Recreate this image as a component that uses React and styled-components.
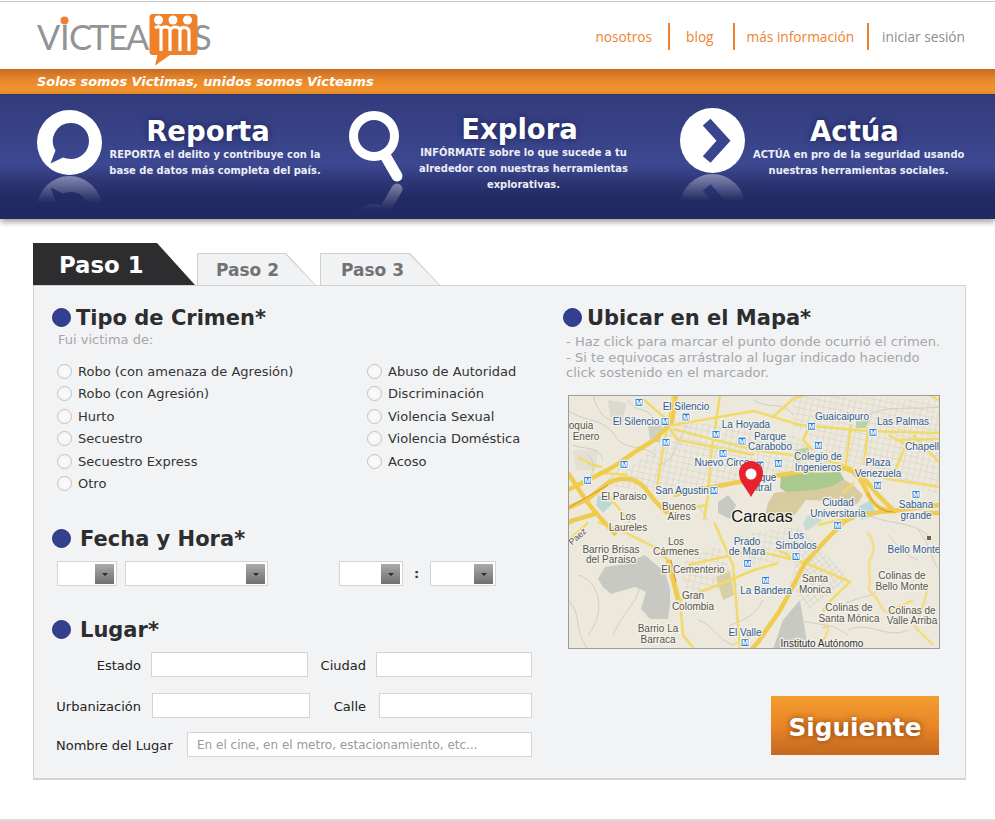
import React from "react";
import styled, { createGlobalStyle } from "styled-components";

const Global = createGlobalStyle`
  html, body { margin: 0; padding: 0; background: #fff; }
  body { font-family: "DejaVu Sans", Verdana, sans-serif; overflow: hidden; }
  * { box-sizing: border-box; }
`;

const Page = styled.div`
  width: 995px;
  height: 821px;
  padding-top: 1px;
  display: flex;
  flex-direction: column;
`;
const TopRule = styled.div`
  height: 1px;
  background: #c8c8c8;
`;
const Header = styled.header`
  height: 67px;
  padding: 3px 30px 0 30px;
  display: flex;
  justify-content: space-between;
  align-items: flex-start;
`;
const LogoSvg = styled.svg`
  display: block;
  width: 190px;
  height: 65px;
`;
const LogoText = styled.text`
  font-family: "Lato", "Open Sans", sans-serif;
  font-size: 34.5px;
  fill: #929496;
`;
const Nav = styled.nav`
  display: flex;
  align-items: center;
  height: 27px;
  margin-top: 18px;
`;
const NavLink = styled.a`
  font-family: "Open Sans", sans-serif;
  font-size: 13.7px;
  color: ${(p) => (p.$muted ? "#8e8e8e" : "#ee8230")};
`;
const NavSep = styled.span`
  width: 2px;
  height: 27px;
  background: #ee7f2d;
  margin: 0 ${(p) => p.$r}px 0 ${(p) => p.$l}px;
`;
const Tagline = styled.div`
  height: 25px;
  padding: 0 0 1px 37px;
  display: flex;
  align-items: center;
  font-size: 12.9px;
  font-weight: 700;
  font-style: italic;
  color: #fff;
  background: linear-gradient(#c46a22 0%, #e3832b 35%, #f0912c 70%, #f0932d 100%);
`;
const Band = styled.section`
  height: 125px;
  padding-left: 37px;
  display: grid;
  grid-template-columns: 312px 331px 1fr;
  background: linear-gradient(#333b7b 0%, #3a458c 45%, #3d4891 56%, #2f3878 68%, #222b64 82%, #1f285f 100%);
  box-shadow: 0 3px 6px rgba(0, 0, 0, 0.38);
  border-top: 1px solid #2f3670;
`;
const Feature = styled.article`
  display: flex;
  align-items: flex-start;
`;
const IconSvg = styled.svg`
  display: block;
  flex: none;
  overflow: visible;
  margin-top: ${(p) => p.$mt}px;
`;
const FeatureText = styled.div`
  width: ${(p) => p.$w}px;
  margin-left: ${(p) => p.$ml}px;
  margin-top: ${(p) => p.$mt}px;
  text-align: center;
  color: #fff;
`;
const FeatureTitle = styled.h2`
  margin: 0;
  padding-right: ${(p) => p.$shift}px;
  font-size: 27.5px;
  line-height: 31px;
  font-weight: 700;
  text-shadow: 0 0 6px rgba(10, 14, 60, 0.6);
`;
const FeatureDesc = styled.p`
  margin: 0;
  font-size: 9.95px;
  line-height: 16px;
  font-weight: 700;
  color: #eceef6;
  white-space: pre;
`;

const TabsRow = styled.div`
  margin: 24px 0 0 33px;
  height: 42px;
  display: flex;
  align-items: flex-end;
`;
const ActiveTab = styled.div`
  width: 162px;
  height: 42px;
  padding: 9px 0 0 26px;
  background: #2d2d2f;
  clip-path: polygon(0 0, 124px 0, 100% 100%, 0 100%);
  font-size: 22.8px;
  line-height: 26px;
  font-weight: 700;
  color: #fff;
`;
const TabShell = styled.div`
  width: ${(p) => p.$w}px;
  height: 32px;
  margin-left: ${(p) => p.$ml}px;
  padding: 1px 1px 0 1px;
  background: #cfcfcf;
  clip-path: polygon(0 0, calc(100% - 30px) 0, 100% 100%, 0 100%);
`;
const TabFace = styled.div`
  height: 31px;
  padding: 5px 0 0 ${(p) => p.$pl}px;
  background: #f1f2f4;
  clip-path: polygon(0 0, calc(100% - 30px) 0, 100% 100%, 0 100%);
  font-size: 17px;
  line-height: 22px;
  font-weight: 700;
  color: #727274;
`;
const Panel = styled.main`
  margin-left: 33px;
  width: 933px;
  height: 495px;
  padding-top: 18px;
  background: #f2f3f5;
  border: 1px solid #d2d2d2;
  border-bottom-width: 2px;
  display: grid;
  grid-template-columns: 529px 1fr;
`;
const LeftCol = styled.div`
  padding-left: 18px;
`;
const RightCol = styled.div``;
const SectionHead = styled.div`
  display: flex;
  align-items: center;
  height: 26px;
  gap: ${(p) => p.$gap}px;
  margin-top: ${(p) => p.$mt || 0}px;
`;
const Bullet = styled.span`
  width: 19px;
  height: 19px;
  flex: none;
  border-radius: 50%;
  background: #33408f;
  border: 1px solid #273272;
`;
const SectionTitle = styled.h3`
  margin: 2px 0 0;
  font-size: 21px;
  line-height: 26px;
  font-weight: 700;
  color: #2d2d2f;
`;
const Hint = styled.div`
  margin: 1px 0 0 6px;
  font-size: 13px;
  line-height: 17px;
  color: #a6a6a6;
`;
const RadioGrid = styled.div`
  margin: 12px 0 0 5px;
  display: grid;
  grid-template-rows: repeat(6, 22.5px);
  grid-auto-flow: column;
  grid-template-columns: 310px 1fr;
`;
const RadioRow = styled.label`
  display: flex;
  align-items: center;
  font-size: 13px;
  color: #333;
`;
const Radio = styled.input.attrs({ type: "radio" })`
  appearance: none;
  width: 15px;
  height: 15px;
  margin: 0 6px 0 0;
  flex: none;
  border-radius: 50%;
  border: 1px solid #c2c2c2;
  background: radial-gradient(#fbfbfb, #f3f3f3);
`;
const DateRow = styled.div`
  margin: 10px 0 0 5px;
  display: flex;
  align-items: center;
`;
const FakeSelect = styled.div`
  width: ${(p) => p.$w}px;
  height: 25px;
  margin-right: ${(p) => p.$mr || 0}px;
  padding: 2px 2px 2px 0;
  background: #fff;
  border: 1px solid #d4d4d4;
  display: flex;
  justify-content: flex-end;
`;
const SelectBtn = styled.span`
  width: 19px;
  height: 20px;
  background: linear-gradient(#aaaaaa, #6f6f6f);
  display: flex;
  align-items: center;
  justify-content: center;
  &::after {
    content: "";
    border-left: 3.5px solid transparent;
    border-right: 3.5px solid transparent;
    border-top: 3.5px solid #2c2c2c;
  }
`;
const Colon = styled.span`
  width: 27px;
  text-align: center;
  font-size: 13px;
  font-weight: 700;
  color: #333;
`;
const FieldRow = styled.div`
  display: flex;
  align-items: center;
  margin: ${(p) => p.$mt}px 0 0 4px;
`;
const FieldLabel = styled.label`
  width: ${(p) => p.$w}px;
  margin-right: ${(p) => p.$mr}px;
  padding-top: 2px;
  text-align: ${(p) => (p.$left ? "left" : "right")};
  font-size: 13px;
  color: #222;
  white-space: nowrap;
`;
const TextInput = styled.input`
  width: ${(p) => p.$w}px;
  height: 25px;
  padding: 0 9px;
  border: 1px solid #d4d4d4;
  border-radius: 0;
  background: #fff;
  outline: none;
  font-family: "DejaVu Sans", sans-serif;
  font-size: 12px;
  &::placeholder {
    color: #9a9a9a;
    opacity: 1;
  }
`;
const MapHelp = styled.p`
  margin: 4px 0 0 3px;
  font-size: 13.1px;
  line-height: 15.5px;
  color: #a6a6a6;
  white-space: pre;
`;
const MapFrame = styled.svg`
  display: block;
  margin: 14px 0 0 5px;
  width: 372px;
  height: 254px;
  border: 1px solid #9c9c9c;
  background: #ece8dc;
`;
const MapLabel = styled.text`
  font-family: "Liberation Sans", Arial, sans-serif;
  font-size: ${(p) => p.$size || 10}px;
  text-anchor: middle;
  dominant-baseline: middle;
  fill: ${(p) => p.$fill};
  stroke: #f6f3ec;
  stroke-width: 2.5px;
  stroke-opacity: 0.9;
  paint-order: stroke;
`;
const MetroBox = styled.rect`
  fill: #3580d4;
  stroke: #fff;
  stroke-width: 1px;
`;
const MetroM = styled.text`
  font-family: "Liberation Sans", Arial, sans-serif;
  font-size: 7.5px;
  font-weight: 700;
  text-anchor: middle;
  fill: #fff;
`;
const NextButton = styled.button`
  display: block;
  margin: 47px 0 0 208px;
  width: 168px;
  height: 59px;
  border: 0;
  padding: 4px 0 0;
  background: linear-gradient(#f29d2e 0%, #ea8528 50%, #c4691f 100%);
  font-family: "DejaVu Sans", sans-serif;
  font-size: 24.7px;
  font-weight: 700;
  color: #fff;
  text-shadow: 0 0 6px rgba(90, 40, 0, 0.7);
`;
const FooterRule = styled.div`
  margin-top: auto;
  height: 2px;
  background: #dcdcdc;
`;

const Reflect = ({ id, height, children }) => (
  <>
    <defs>
      <linearGradient id={id} x1="0" y1="0" x2="0" y2="1">
        <stop offset="0" stopColor="#fff" stopOpacity="0.42" />
        <stop offset="1" stopColor="#fff" stopOpacity="0" />
      </linearGradient>
      <mask id={id + "m"} maskUnits="userSpaceOnUse" x="-5" y={height} width="80" height="28">
        <rect x="-5" y={height} width="80" height="28" fill={`url(#${id})`} />
      </mask>
    </defs>
    <g mask={`url(#${id}m)`}>
      <g transform={`translate(0 ${height * 2 + 1}) scale(1 -1)`}>{children}</g>
    </g>
    {children}
  </>
);

const SPEECH =
  "M32.5 0a32.5 32.5 0 1 0 0 65a32.5 32.5 0 1 0 0-65ZM34 13a18 18 0 0 1 0 36c-3 0-6-1-8-1.500L13.500 53.500L18.500 40.500a18 18 0 0 1 15.500-27.500Z";

const SpeechIcon = () => (
  <IconSvg $mt={15} width="65" height="92" viewBox="0 0 65 92">
    <Reflect id="rf1" height={65}>
      <path d={SPEECH} fill="#fff" fillRule="evenodd" />
    </Reflect>
  </IconSvg>
);
const LensIcon = () => (
  <IconSvg $mt={16} width="54" height="96" viewBox="0 0 54 96">
    <Reflect id="rf2" height={71}>
      <circle cx="25" cy="25" r="20.500" fill="none" stroke="#fff" strokeWidth="9" />
      <path d="M37 46L48 65" stroke="#fff" strokeWidth="11" strokeLinecap="round" />
    </Reflect>
  </IconSvg>
);
const ArrowIcon = () => (
  <IconSvg $mt={13} width="65" height="92" viewBox="0 0 65 92">
    <Reflect id="rf3" height={65}>
      <circle cx="32.500" cy="32.500" r="32.500" fill="#fff" />
      <path d="M22.800 17.500L30.500 10.800L50.500 32.800L30.500 54.800L22.800 48.200L36.500 32.800Z" fill="#3a4590" />
    </Reflect>
  </IconSvg>
);

const Logo = () => (
  <LogoSvg viewBox="30 5 190 65">
    <LogoText x="37 60 69 89 108 126" y="50">VICTEA</LogoText>
    <LogoText x="193" y="50">S</LogoText>
    <circle cx="64.500" cy="20.500" r="4" fill="#ee8230" />
    <path
      d="M153 14H194a3.500 3.500 0 0 1 3.500 3.500V51.500a3.500 3.500 0 0 1-3.500 3.500H170L155 65.500L157.500 55H153a3.500 3.500 0 0 1-3.500-3.500V17.500A3.500 3.500 0 0 1 153 14Z"
      fill="#ee8129"
    />
    <circle cx="158.500" cy="20" r="4.500" fill="#fff" />
    <circle cx="173" cy="20" r="4.500" fill="#fff" />
    <circle cx="187.500" cy="20" r="4.500" fill="#fff" />
    <path
      d="M155 28c3-2 5-2 6 1V51M161 29c2-3 8-3 9 1V51M170 30c2-4 9-4 10 0V51M180 30c2-4 8-3 9 1V51"
      fill="none"
      stroke="#fff"
      strokeWidth="3.200"
    />
  </LogoSvg>
);

const LEFT_RADIOS = [
  "Robo (con amenaza de Agresión)",
  "Robo (con Agresión)",
  "Hurto",
  "Secuestro",
  "Secuestro Express",
  "Otro",
];
const RIGHT_RADIOS = ["Abuso de Autoridad", "Discriminación", "Violencia Sexual", "Violencia Doméstica", "Acoso"];

const BLUE = "#2f5c94";
const GRAY = "#565650";
const LABELS = [
  ["El Silencio", 118, 12, BLUE],
  ["El Silencio", 68, 27, BLUE],
  ["oquia", 13, 31, GRAY],
  ["Enero", 18, 42, GRAY],
  ["La Hoyada", 178, 30, BLUE],
  ["Parque", 202, 42, BLUE],
  ["Carabobo", 202, 52, BLUE],
  ["Guaicaipuro", 274, 22, BLUE],
  ["Las Palmas", 335, 27, BLUE],
  ["Chapell", 354, 52, BLUE],
  ["Colegio de", 250, 62, BLUE],
  ["Ingenieros", 250, 73, BLUE],
  ["Plaza", 310, 68, BLUE],
  ["Venezuela", 310, 79, BLUE],
  ["Nuevo Circo", 154, 68, BLUE],
  ["San Agustin", 114, 96, BLUE],
  ["que", 200, 83, BLUE],
  ["ntral", 194, 93, BLUE],
  ["El Paraiso", 56, 102, GRAY],
  ["Buenos", 111, 112, GRAY],
  ["Aires", 111, 122, GRAY],
  ["Los", 60, 122, GRAY],
  ["Laureles", 60, 133, GRAY],
  ["Ciudad", 270, 108, BLUE],
  ["Universitaria", 270, 119, BLUE],
  ["Sabana", 348, 110, BLUE],
  ["grande", 348, 121, BLUE],
  ["Los", 228, 141, BLUE],
  ["Símbolos", 228, 151, BLUE],
  ["Prado", 179, 147, BLUE],
  ["de Mara", 179, 157, BLUE],
  ["Los", 108, 147, GRAY],
  ["Cármenes", 108, 157, GRAY],
  ["Barrio Brisas", 43, 155, GRAY],
  ["del Paraiso", 43, 165, GRAY],
  ["El Cementerio", 125, 175, GRAY],
  ["Bello Monte", 346, 155, BLUE],
  ["Santa", 247, 184, GRAY],
  ["Monica", 247, 195, GRAY],
  ["La Bandera", 198, 196, BLUE],
  ["Colinas de", 334, 181, GRAY],
  ["Bello Monte", 334, 192, GRAY],
  ["Gran", 125, 201, GRAY],
  ["Colombia", 125, 212, GRAY],
  ["Colinas de", 281, 213, GRAY],
  ["Santa Mónica", 281, 224, GRAY],
  ["Colinas de", 344, 216, GRAY],
  ["Valle Arriba", 344, 226, GRAY],
  ["Barrio La", 90, 234, GRAY],
  ["Barraca", 90, 245, GRAY],
  ["El Valle", 177, 238, BLUE],
  ["Instituto Autónomo", 254, 249, "#333"],
];
const METROS = [
  [252, 322], [330, 380], [393, 366], [483, 418], [561, 438], [333, 442], [504, 475], [207, 508],
  [98, 556], [477, 587], [670, 505], [615, 510], [770, 394], [790, 451], [954, 412], [968, 571],
  [1083, 598], [848, 691], [723, 785], [578, 805], [632, 856], [570, 1043],
].map(([x, y]) => [x / 3 - 13, y / 3 - 100]);

const MAJOR = [
  "M0 113L20 104L40 88C55 80 68 84 76 92L88 107L98 117L118 112",
  "M105 100L140 93L186 84L232 77L272 73C285 73 292 82 298 95C303 108 312 116 325 116L372 110",
  "M0 95L22 84L45 72L70 55L88 44L104 26L108 0",
  "M0 78C8 90 16 104 28 118L48 140",
  "M100 165L105 185L110 205",
  "M276 127L258 145L237 168L222 197L211 217L190 247L184 254",
  "M276 127C290 118 305 118 322 116",
  "M0 127L30 118",
  "M290 76L310 100L328 118",
  "M355 118H372",
];
const ROADS = [
  "M75 4L105 30L186 16L232 30L300 36L372 38",
  "M105 34L186 55L258 65L320 84L372 92",
  "M105 0L96 50L88 96",
  "M152 0L143 60L140 100L136 125",
  "M30 127L52 135L86 152L100 165L108 190L112 205L115 240L126 254",
  "M112 205L150 190L186 175L210 168",
  "M120 170L186 155L235 167",
  "M146 127L165 170L168 205L172 254",
  "M238 168L282 187L262 206L255 216",
  "M205 22L225 4L236 0",
  "M283 30L277 75",
  "M300 35L296 70",
  "M320 40L330 45L338 50L325 80",
  "M345 40L372 68",
  "M372 6L362 0",
  "M284 122L250 130",
  "M0 145L10 138L20 127",
  "M240 35L235 45L245 55",
  "M186 75L192 88",
  "M210 155L225 163L235 168",
  "M105 115L140 110",
  "M40 100L60 125L62 127",
  "M100 32L110 45L186 60",
  "M0 130L8 124",
  "M60 80L35 78",
  "M10 62L25 70L34 72",
  "M330 45L372 44",
  "M286 88L275 98",
  "M0 145L18 130",
];
const SQUIGGLE = [
  "M299 137C306 146 308 154 303 162C298 172 304 178 301 195C312 205 312 212 317 217",
  "M360 190C358 205 352 220 347 232L365 250",
  "M255 233C265 228 258 240 254 248",
  "M318 218L345 205",
  "M165 250L185 240",
];
const MINOR = [
  "M0 15C20 30 35 20 50 45C60 55 75 50 88 60", "M25 0C30 20 40 30 60 25", "M120 30C105 50 110 65 90 70",
  "M20 60C30 70 25 80 15 90", "M60 60C50 70 55 75 40 85", "M130 110L140 125", "M70 175C80 200 55 215 45 240",
  "M10 180C30 185 40 215 20 240", "M130 225C145 230 150 245 165 250", "M280 235C300 225 320 245 340 235",
  "M350 135C360 145 365 170 372 175", "M225 222C245 232 260 225 280 240", "M300 20C320 10 340 15 372 12",
  "M186 5C200 15 215 5 225 20", "M300 120C320 130 340 125 360 140", "M0 205C15 220 5 235 20 254",
  "M195 205C185 225 170 225 160 232", "M5 50C15 55 30 50 35 65", "M60 5C70 20 80 10 85 25",
  "M270 215C285 200 300 205 310 195", "M320 140C330 150 335 160 350 165",
];

const CaracasMap = () => (
  <MapFrame viewBox="1 1 370 252" preserveAspectRatio="none">
    <defs>
      <pattern id="gridp" width="6" height="6" patternUnits="userSpaceOnUse" patternTransform="rotate(12)">
        <path d="M0 0H6M0 0V6" stroke="#d4cfc2" strokeWidth="1" fill="none" />
      </pattern>
      <pattern id="gridq" width="5" height="5" patternUnits="userSpaceOnUse" patternTransform="rotate(-38)">
        <path d="M0 0H5M0 0V5" stroke="#d0cbbe" strokeWidth="1" fill="none" />
      </pattern>
    </defs>
    <rect width="372" height="254" fill="#ece8dc" />
    <path d="M105 25L225 40L275 75L190 85L105 100L40 90L90 50Z" fill="url(#gridp)" />
    <path d="M225 0L372 5V100L330 85L275 72L225 30Z" fill="url(#gridp)" />
    <path d="M235 135L282 185L240 215L222 190Z" fill="url(#gridq)" />
    <path d="M110 170L150 150L170 190L120 200Z" fill="url(#gridp)" />
    <path d="M170 140L235 130L225 165L175 170Z" fill="url(#gridp)" />
    <path d="M40 5L58 8L55 25L42 22Z" fill="#dcdad0" />
    <path d="M5 55L30 55L28 75L8 75Z" fill="#e2dfd4" />
    <path d="M80 30L95 25L92 48L82 45Z" fill="#cfcfc8" />
    <path
      d="M30 184L37 172L57 169L77 160L85 167L97 177L102 194L102 210L100 224L82 224L73 214L78 197L67 192L43 199L35 192Z"
      fill="#c9c9c3"
    />
    <path d="M148 182L162 176L166 200L155 205Z" fill="#d8cfa8" />
    <path d="M150 107L160 100L168 110L162 124L150 118Z" fill="#c9c9c3" />
    <path d="M30 100L45 108L35 118L28 110Z" fill="#bcd8d4" />
    <path d="M215 225L232 205L240 254H205Z" fill="#c9c9c3" />
    <path d="M240 120L255 125L238 136L235 128Z" fill="#c9dcd4" />
    <path d="M290 112L303 105L308 120L293 125Z" fill="#bcd8dc" />
    <path
      d="M206 98L246 93L272 82L285 90L295 100L290 108L283 112L263 106L238 105L225 122L205 127L195 127L200 108Z"
      fill="#d9cba0"
    />
    <path d="M213 80L229 78L272 77L276 84L262 92L245 95L218 97L212 93Z" fill="#a9c98e" />
    <path d="M227 55L240 52L244 62L228 68Z" fill="#bcd3a6" />
    <path d="M288 26L302 24L298 33L288 33Z" fill="#bcd3a6" />
    <g fill="none" stroke="#d2cdc0" strokeWidth="1">
      {MINOR.map((d) => (
        <path key={d} d={d} />
      ))}
    </g>
    <g fill="none" stroke="#f2da68" strokeWidth="2.500">
      {ROADS.map((d) => (
        <path key={d} d={d} />
      ))}
    </g>
    <g fill="none" stroke="#f2de88" strokeWidth="2.500">
      {SQUIGGLE.map((d) => (
        <path key={d} d={d} />
      ))}
    </g>
    <g fill="none" stroke="#efcb4e" strokeWidth="4.500">
      {MAJOR.map((d) => (
        <path key={d} d={d} />
      ))}
    </g>
    <g fill="none" stroke="#d98f2e" strokeWidth="1">
      <path d="M103 165L108 187" />
      <path d="M0 113L40 90" />
      <path d="M300 98C305 110 314 117 325 117" />
    </g>
    {LABELS.map(([t, x, y, c], i) => (
      <MapLabel key={i} x={x} y={y} $fill={c}>
        {t}
      </MapLabel>
    ))}
    <MapLabel x="10" y="142" $fill={GRAY} $size={9} transform="rotate(-42 10 142)">
      Paez
    </MapLabel>
    <MapLabel x="194" y="123" $fill="#111" $size={16.500}>
      Caracas
    </MapLabel>
    <rect x="359" y="141" width="4" height="4" fill="#6b6350" />
    {METROS.map(([x, y], i) => (
      <g key={i}>
        <MetroBox x={x - 4} y={y - 4} width="8" height="8" rx="1" />
        <MetroM x={x} y={y + 2.700}>M</MetroM>
      </g>
    ))}
    <path
      d="M183 102C177 91 171 87 171 78A12 12 0 0 1 195 78C195 87 189 91 183 102Z"
      fill="#e8212e"
    />
    <circle cx="183" cy="79" r="5.500" fill="#fff" />
  </MapFrame>
);

export default function App() {
  return (
    <Page>
      <Global />
      <TopRule />
      <Header>
        <Logo />
        <Nav>
          <NavLink>nosotros</NavLink>
          <NavSep $l={16} $r={16} />
          <NavLink>blog</NavLink>
          <NavSep $l={19} $r={12} />
          <NavLink>más información</NavLink>
          <NavSep $l={13} $r={13} />
          <NavLink $muted>iniciar sesión</NavLink>
        </Nav>
      </Header>
      <Tagline>Solos somos Victimas, unidos somos Victeams</Tagline>
      <Band>
        <Feature>
          <SpeechIcon />
          <FeatureText $w={212} $ml={7} $mt={21}>
            <FeatureTitle $shift={14}>Reporta</FeatureTitle>
            <FeatureDesc>{"REPORTA el delito y contribuye con la\nbase de datos más completa del país."}</FeatureDesc>
          </FeatureText>
        </Feature>
        <Feature>
          <LensIcon />
          <FeatureText $w={209} $ml={16} $mt={19}>
            <FeatureTitle $shift={8}>Explora</FeatureTitle>
            <FeatureDesc>
              {"INFÓRMATE sobre lo que sucede a tu\nalrededor con nuestras herramientas\nexplorativas."}
            </FeatureDesc>
          </FeatureText>
        </Feature>
        <Feature>
          <ArrowIcon />
          <FeatureText $w={211} $ml={8} $mt={21}>
            <FeatureTitle $shift={8}>Actúa</FeatureTitle>
            <FeatureDesc>{"ACTÚA en pro de la seguridad usando\nnuestras herramientas sociales."}</FeatureDesc>
          </FeatureText>
        </Feature>
      </Band>
      <TabsRow>
        <ActiveTab>Paso 1</ActiveTab>
        <TabShell $w={119} $ml={2}>
          <TabFace $pl={18}>Paso 2</TabFace>
        </TabShell>
        <TabShell $w={120} $ml={4}>
          <TabFace $pl={20}>Paso 3</TabFace>
        </TabShell>
      </TabsRow>
      <Panel>
        <LeftCol>
          <SectionHead $gap={5}>
            <Bullet />
            <SectionTitle>Tipo de Crimen*</SectionTitle>
          </SectionHead>
          <Hint>Fui victima de:</Hint>
          <RadioGrid>
            {LEFT_RADIOS.map((r) => (
              <RadioRow key={r}>
                <Radio name="crimen" />
                {r}
              </RadioRow>
            ))}
            {RIGHT_RADIOS.map((r) => (
              <RadioRow key={r}>
                <Radio name="crimen" />
                {r}
              </RadioRow>
            ))}
          </RadioGrid>
          <SectionHead $gap={9} $mt={30}>
            <Bullet />
            <SectionTitle>Fecha y Hora*</SectionTitle>
          </SectionHead>
          <DateRow>
            <FakeSelect $w={60} $mr={8}>
              <SelectBtn />
            </FakeSelect>
            <FakeSelect $w={143} $mr={71}>
              <SelectBtn />
            </FakeSelect>
            <FakeSelect $w={64}>
              <SelectBtn />
            </FakeSelect>
            <Colon>:</Colon>
            <FakeSelect $w={66}>
              <SelectBtn />
            </FakeSelect>
          </DateRow>
          <SectionHead $gap={9} $mt={30}>
            <Bullet />
            <SectionTitle>Lugar*</SectionTitle>
          </SectionHead>
          <FieldRow $mt={10}>
            <FieldLabel $w={85} $mr={10}>Estado</FieldLabel>
            <TextInput $w={157} />
            <FieldLabel $w={58} $mr={10}>Ciudad</FieldLabel>
            <TextInput $w={156} />
          </FieldRow>
          <FieldRow $mt={16}>
            <FieldLabel $w={85} $mr={11}>Urbanización</FieldLabel>
            <TextInput $w={158} />
            <FieldLabel $w={56} $mr={13}>Calle</FieldLabel>
            <TextInput $w={153} />
          </FieldRow>
          <FieldRow $mt={14}>
            <FieldLabel $w={118} $mr={13} $left>Nombre del Lugar</FieldLabel>
            <TextInput $w={345} placeholder="En el cine, en el metro, estacionamiento, etc..." />
          </FieldRow>
        </LeftCol>
        <RightCol>
          <SectionHead $gap={5}>
            <Bullet />
            <SectionTitle>Ubicar en el Mapa*</SectionTitle>
          </SectionHead>
          <MapHelp>
            {"- Haz click para marcar el punto donde ocurrió el crimen.\n- Si te equivocas arrástralo al lugar indicado haciendo\nclick sostenido en el marcador."}
          </MapHelp>
          <CaracasMap />
          <NextButton>Siguiente</NextButton>
        </RightCol>
      </Panel>
      <FooterRule />
    </Page>
  );
}
